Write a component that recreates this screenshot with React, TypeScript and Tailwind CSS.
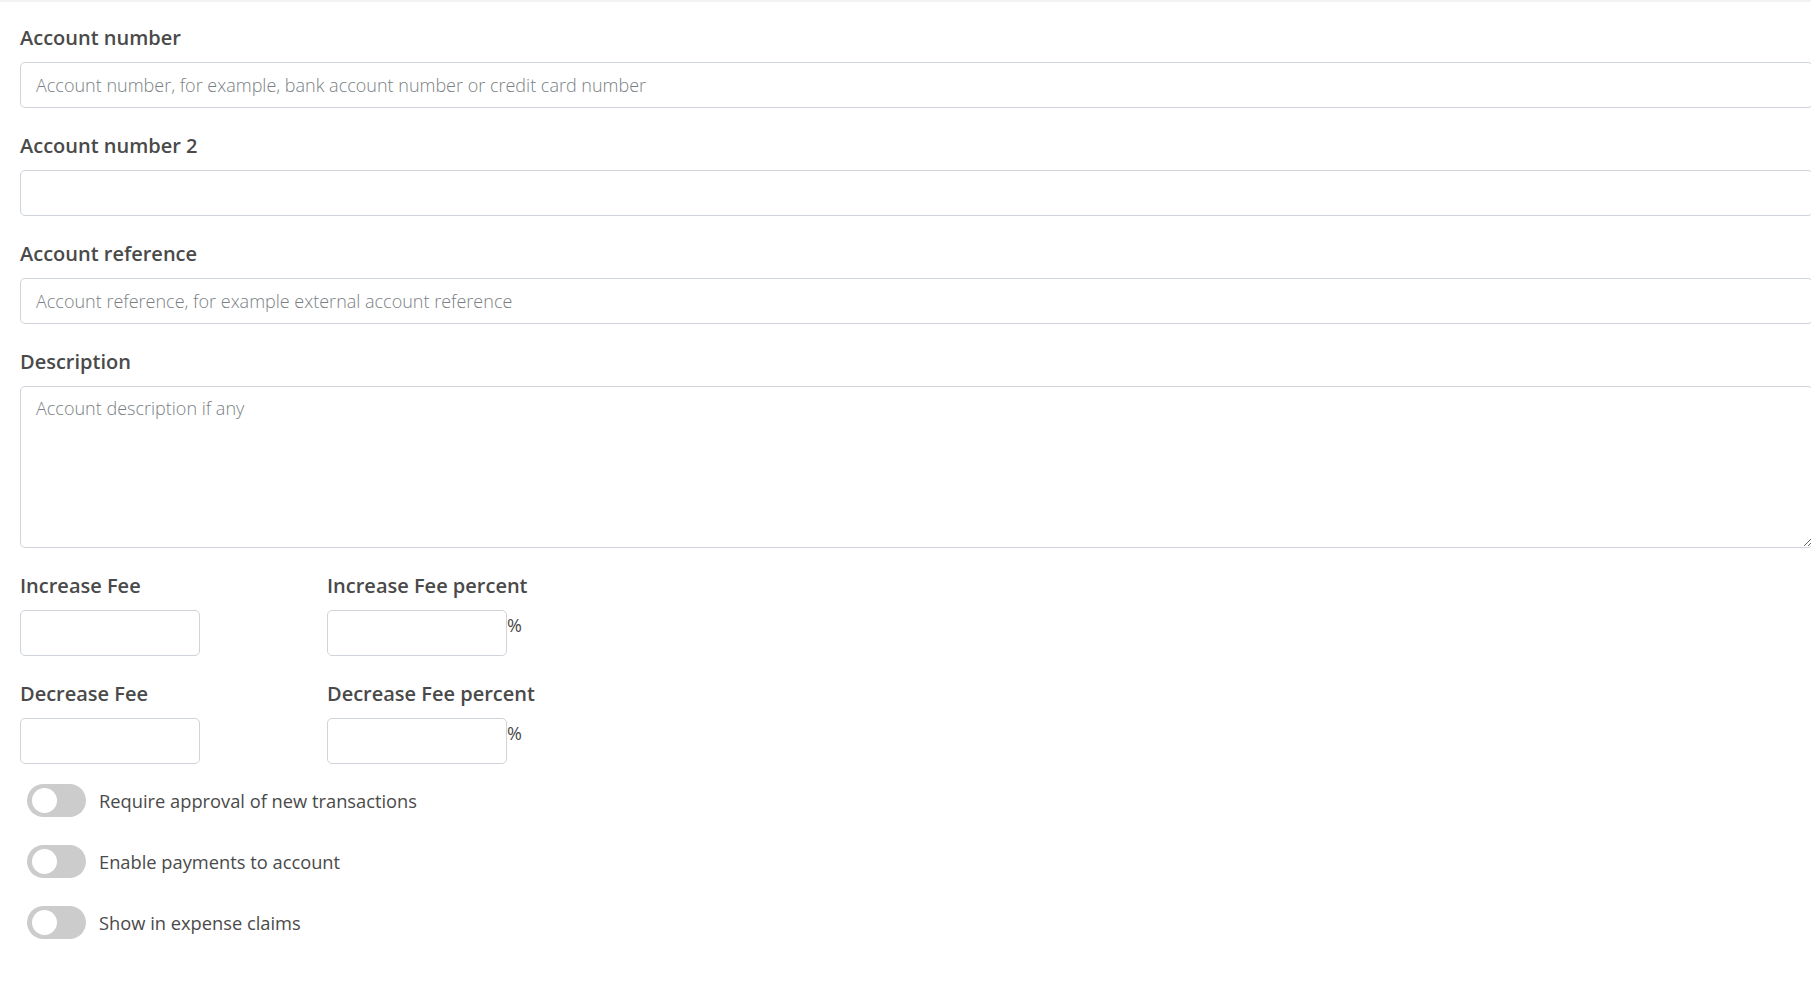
import React from "react";

const labelCls = "block mb-[10px] text-[20px] leading-[29px] font-semibold text-[#4a4a4a]";

const Field = ({ label, placeholder }: { label: string; placeholder?: string }) => (
  <div className="mb-[23px]">
    <label className={labelCls}>{label}</label>
    <input
      placeholder={placeholder}
      className="block w-[1793px] h-[46px] px-[15px] border border-[#ced4da] rounded-[5px] bg-white text-[18px] font-light text-[#495057] placeholder:text-[#7a7f85] outline-none"
    />
  </div>
);

const SmallField = ({ label, percent }: { label: string; percent?: boolean }) => (
  <div className={percent ? "" : "w-[307px] shrink-0"}>
    <label className={labelCls}>{label}</label>
    <div className="flex items-start">
      <input className="block w-[180px] h-[46px] px-[14px] border border-[#ced4da] rounded-[5px] bg-white outline-none" />
      {percent && <span className="mt-[5px] text-[18px] leading-[20px] text-[#4a4a4a]">%</span>}
    </div>
  </div>
);

const Toggle = ({ label }: { label: string }) => (
  <div className="flex items-center h-[33px] mb-[28px] pl-[7px]">
    <div className="relative w-[59px] h-[33px] rounded-full bg-[#cccccc] shrink-0">
      <div className="absolute left-[5px] top-[4px] w-[25px] h-[25px] rounded-full bg-white" />
    </div>
    <span className="ml-[13px] text-[18.3px] text-[#4a4a4a]">{label}</span>
  </div>
);

export default function App() {
  return (
    <div
      className="w-[1811px] h-[986px] overflow-hidden bg-white"
      style={{ fontFamily: '"Open Sans", "Noto Sans", sans-serif' }}
    >
      <div className="h-[2px] bg-[#f3f3f3]" />
      <div className="pl-[20px] pt-[21px]">
        <Field label="Account number" placeholder="Account number, for example, bank account number or credit card number" />
        <Field label="Account number 2" />
        <Field label="Account reference" placeholder="Account reference, for example external account reference" />
        <div className="mb-[23px]">
          <label className={labelCls}>Description</label>
          <textarea
            placeholder="Account description if any"
            className="block w-[1793px] h-[162px] px-[15px] py-[8px] border border-[#ced4da] rounded-[5px] bg-white text-[18px] font-light placeholder:text-[#7a7f85] outline-none resize-y"
          />
        </div>
        <div className="flex mb-[23px]">
          <SmallField label="Increase Fee" />
          <SmallField label="Increase Fee percent" percent />
        </div>
        <div className="flex mb-[20px]">
          <SmallField label="Decrease Fee" />
          <SmallField label="Decrease Fee percent" percent />
        </div>
        <Toggle label="Require approval of new transactions" />
        <Toggle label="Enable payments to account" />
        <Toggle label="Show in expense claims" />
      </div>
    </div>
  );
}
